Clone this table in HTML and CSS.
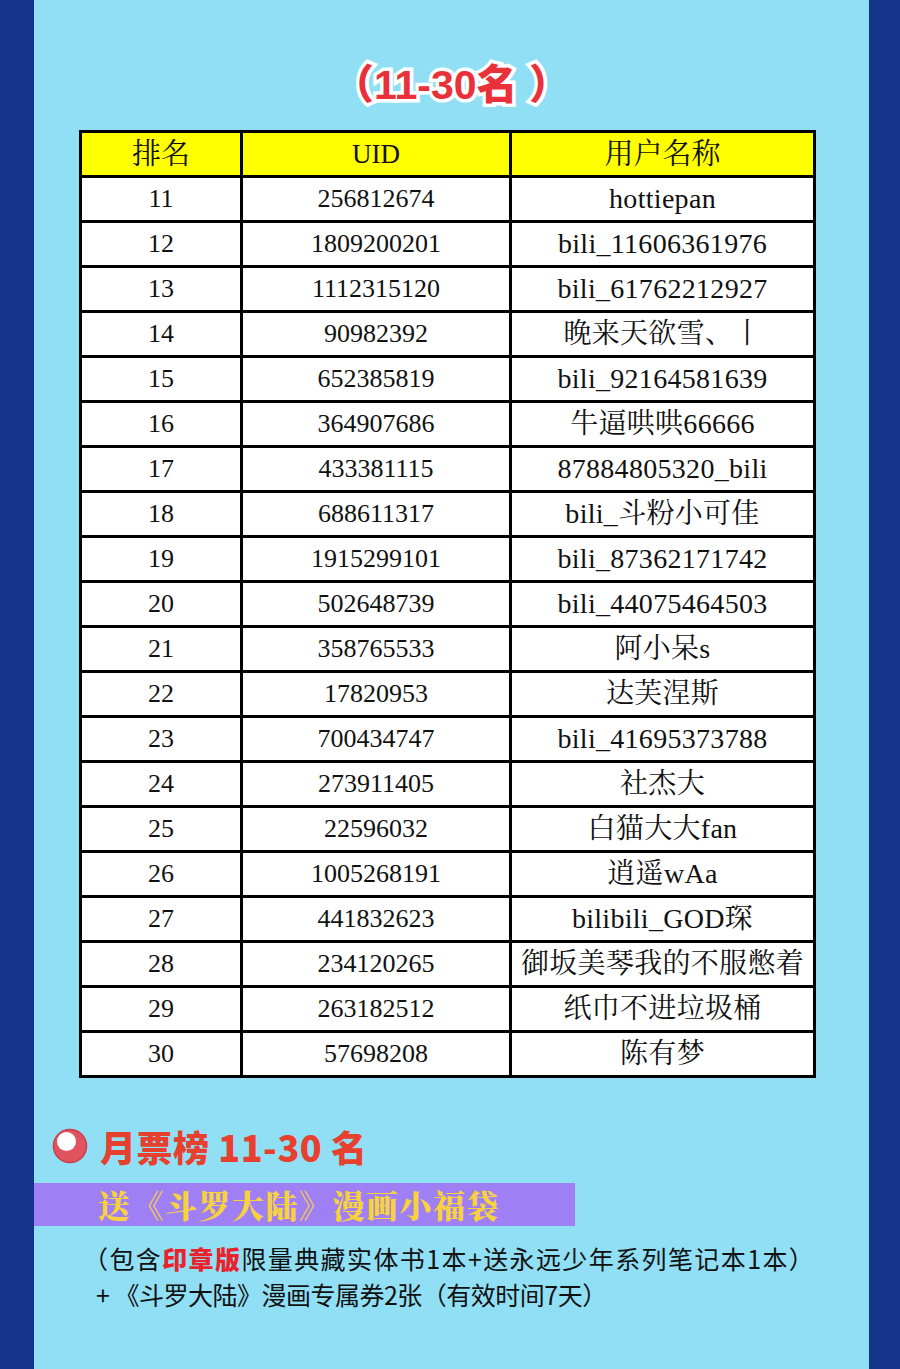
FILE: index.html
```html
<!DOCTYPE html>
<html lang="zh-CN">
<head>
<meta charset="utf-8">
<title>月票榜 11-30 名</title>
<link rel="stylesheet" href="styles.css">
</head>
<body>
<div class="page">
  <h1 class="title">（11-30名 ）</h1>
  <table class="rank">
    <colgroup><col class="c1"><col class="c2"><col class="c3"></colgroup>
    <thead>
      <tr><th class="cjk">排名</th><th>UID</th><th class="cjk">用户名称</th></tr>
    </thead>
    <tbody>
      <tr><td>11</td><td>256812674</td><td class="nm">hottiepan</td></tr>
      <tr><td>12</td><td>1809200201</td><td class="nm">bili_11606361976</td></tr>
      <tr><td>13</td><td>1112315120</td><td class="nm">bili_61762212927</td></tr>
      <tr><td>14</td><td>90982392</td><td class="nm">晚来天欲雪、丨</td></tr>
      <tr><td>15</td><td>652385819</td><td class="nm">bili_92164581639</td></tr>
      <tr><td>16</td><td>364907686</td><td class="nm">牛逼哄哄66666</td></tr>
      <tr><td>17</td><td>433381115</td><td class="nm">87884805320_bili</td></tr>
      <tr><td>18</td><td>688611317</td><td class="nm">bili_斗粉小可佳</td></tr>
      <tr><td>19</td><td>1915299101</td><td class="nm">bili_87362171742</td></tr>
      <tr><td>20</td><td>502648739</td><td class="nm">bili_44075464503</td></tr>
      <tr><td>21</td><td>358765533</td><td class="nm">阿小呆s</td></tr>
      <tr><td>22</td><td>17820953</td><td class="nm">达芙涅斯</td></tr>
      <tr><td>23</td><td>700434747</td><td class="nm">bili_41695373788</td></tr>
      <tr><td>24</td><td>273911405</td><td class="nm">社杰大</td></tr>
      <tr><td>25</td><td>22596032</td><td class="nm">白猫大大fan</td></tr>
      <tr><td>26</td><td>1005268191</td><td class="nm">逍遥wAa</td></tr>
      <tr><td>27</td><td>441832623</td><td class="nm">bilibili_GOD琛</td></tr>
      <tr><td>28</td><td>234120265</td><td class="nm">御坂美琴我的不服憋着</td></tr>
      <tr><td>29</td><td>263182512</td><td class="nm">纸巾不进垃圾桶</td></tr>
      <tr><td>30</td><td>57698208</td><td class="nm">陈有梦</td></tr>
    </tbody>
  </table>

  <h2 class="heading">
    <svg class="dot" width="36" height="36" viewBox="0 0 36 36" aria-hidden="true">
      <circle cx="18" cy="18" r="16.5" fill="#e1535f" stroke="#c9404c" stroke-width="1.5"/>
      <circle cx="14.5" cy="13.5" r="9.5" fill="#ffffff"/>
    </svg>
    <span>月票榜 11-30 名</span>
  </h2>
  <div class="prize-bar">送《斗罗大陆》漫画小福袋</div>
  <p class="desc">（包含<strong>印章版</strong>限量典藏实体书1本+送永远少年系列笔记本1本）</p>
  <p class="desc desc2">+ 《斗罗大陆》漫画专属券2张（有效时间7天）</p>
</div>
</body>
</html>
```
FILE: styles.css
```css
html, body {
  margin: 0;
  padding: 0;
}
body {
  background: #15358a;
  font-family: "Liberation Sans", "Noto Sans CJK SC", sans-serif;
}
.page {
  width: 835px;
  margin-left: 34px;
  min-height: 1369px;
  background: #90dff5;
  box-sizing: border-box;
  padding-top: 58px;
  overflow: hidden;
}
.title {
  margin: 0;
  height: 54px;
  line-height: 54px;
  text-align: center;
  font-family: "Liberation Sans", "Noto Sans CJK SC", sans-serif;
  font-weight: 900;
  font-size: 41px;
  letter-spacing: 0;
  color: #ea3038;
  -webkit-text-stroke: 7px #ffffff;
  paint-order: stroke fill;
}
.rank {
  margin: 18px 0 0 45px;
  border-collapse: separate;
  border-spacing: 3px;
  background: #000;
  width: 737px;
  table-layout: fixed;
  font-family: "Liberation Serif", "Noto Serif CJK SC", "Noto Sans CJK SC", serif;
  color: #111;
}
.c1 { width: 158px; }
.c2 { width: 266px; }
.c3 { width: 301px; }
.rank th, .rank td {
  height: 42px;
  padding: 0;
  line-height: 42px;
  text-align: center;
  vertical-align: middle;
  background: #ffffff;
  font-size: 26px;
  font-weight: normal;
  white-space: nowrap;
  overflow: hidden;
}
.rank th {
  background: #ffff00;
  font-size: 27px;
}
.rank th.cjk {
  font-size: 29px;
  line-height: 42px;
}
.rank td.nm {
  font-size: 28px;
  letter-spacing: 0.3px;
}
.heading {
  margin: 47px 0 0 18px;
  height: 42px;
  display: flex;
  align-items: center;
  gap: 12px;
  font-family: "Noto Sans CJK SC", "Liberation Sans", sans-serif;
  font-weight: 900;
  font-size: 36px;
  letter-spacing: 0.5px;
  color: #e8402e;
}
.dot {
  flex: none;
}
.prize-bar {
  margin-top: 16px;
  width: 541px;
  height: 43px;
  box-sizing: border-box;
  padding-left: 64px;
  background: #9f7ff4;
  color: #f7d23c;
  font-family: "Noto Serif CJK SC", "Noto Sans CJK SC", serif;
  font-weight: 900;
  font-size: 32px;
  line-height: 43px;
  letter-spacing: 1.5px;
  white-space: nowrap;
}
.desc {
  margin: 14px 0 0 49px;
  font-family: "Noto Sans CJK SC", "Liberation Sans", sans-serif;
  font-size: 25px;
  line-height: 36px;
  letter-spacing: 1.4px;
  color: #111;
  white-space: nowrap;
}
.desc strong {
  color: #e8232b;
  font-weight: 900;
}
.desc2 {
  margin: 0 0 0 62px;
  letter-spacing: -0.5px;
}
```
